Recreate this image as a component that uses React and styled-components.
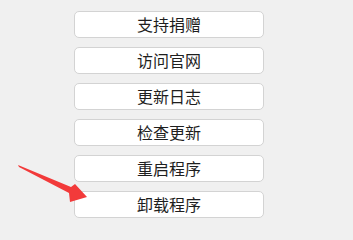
import React from "react";
import styled, { createGlobalStyle } from "styled-components";

const Global = createGlobalStyle`
  html, body { margin: 0; padding: 0; background: #f0f0f0; }
  body { width: 353px; height: 231px; overflow: hidden; }
`;

const Page = styled.div`
  position: relative;
  width: 353px;
  height: 231px;
  background: #f0f0f0;
  box-sizing: border-box;
  padding: 11px 0 0 74px;
`;

const List = styled.div`
  display: flex;
  flex-direction: column;
  gap: 9px;
  width: 190px;
`;

const Button = styled.button`
  box-sizing: border-box;
  height: 27px;
  width: 100%;
  background: #ffffff;
  border: 1px solid #d3d3d3;
  border-radius: 5px;
  font-family: "Noto Sans CJK SC", "Noto Sans", sans-serif;
  font-size: 16px;
  color: #1e1e1e;
  display: flex;
  align-items: center;
  justify-content: center;
  padding: 0 0 2px;
  cursor: pointer;
`;

const Arrow = styled.svg`
  position: absolute;
  left: 0;
  top: 0;
  pointer-events: none;
`;

const items = ["支持捐赠", "访问官网", "更新日志", "检查更新", "重启程序", "卸载程序"];

export default function App() {
  return (
    <>
      <Global />
      <Page>
        <List>
          {items.map((t) => (
            <Button key={t}>{t}</Button>
          ))}
        </List>
        <Arrow width="353" height="231" viewBox="0 0 353 231">
          <polygon
            points="18,165 71,187 75,184 87,197 70,202 69,193 19,167"
            fill="#f23a3a"
          />
        </Arrow>
      </Page>
    </>
  );
}
